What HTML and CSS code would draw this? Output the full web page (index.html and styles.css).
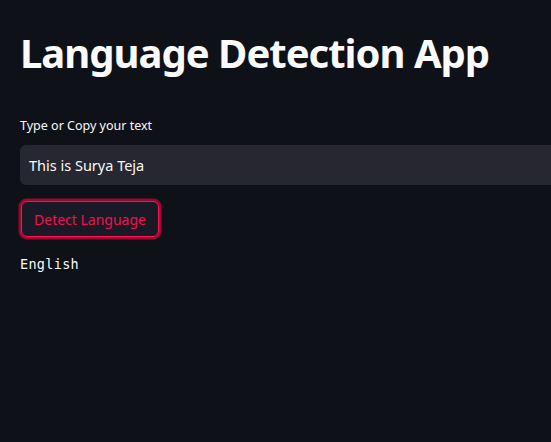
FILE: index.html
```html
<!DOCTYPE html>
<html>
<head>
<meta charset="utf-8">
<link rel="stylesheet" href="styles.css">
</head>
<body>
<main class="app">
  <h1 class="title">Language Detection App</h1>
  <label class="label">Type or Copy your text</label>
  <div class="input">This is Surya Teja</div>
  <button class="btn">Detect Language</button>
  <div class="result">English</div>
</main>
</body>
</html>
```

FILE: styles.css
```css
html, body {
  margin: 0;
  padding: 0;
  background: #0e1117;
  height: 100%;
  overflow: hidden;
}
.app {
  padding: 23px 0 0 20px;
  display: flex;
  flex-direction: column;
  align-items: flex-start;
  font-family: "Noto Sans", "Open Sans", sans-serif;
  color: #fafafa;
}
.title {
  margin: 0;
  font-family: "Noto Sans", sans-serif;
  font-weight: 700;
  font-size: 40px;
  letter-spacing: -1px;
  line-height: 60px;
  color: #fafafa;
}
.label {
  margin-top: 34px;
  font-size: 12.5px;
  line-height: 18px;
  color: #fafafa;
}
.input {
  margin-top: 10px;
  width: 700px;
  height: 40px;
  box-sizing: border-box;
  background: #262730;
  border-radius: 6px 0 0 6px;
  padding: 0 9px;
  display: flex;
  align-items: center;
  font-size: 14.5px;
  color: #fafafa;
}
.btn {
  margin-top: 16px;
  margin-left: 1px;
  width: 138px;
  height: 36px;
  box-sizing: border-box;
  background: #191a26;
  border: 1.5px solid #ff1253;
  border-radius: 6px;
  box-shadow: 0 0 0 2.5px rgba(204, 0, 60, 0.75);
  font-family: "Noto Sans", sans-serif;
  font-size: 14px;
  letter-spacing: 0;
  color: #f0104f;
  padding: 0;
}
.result {
  margin-top: 19px;
  font-family: "DejaVu Sans Mono", monospace;
  font-size: 13.5px;
  letter-spacing: 0.3px;
  color: #fafafa;
}
```
